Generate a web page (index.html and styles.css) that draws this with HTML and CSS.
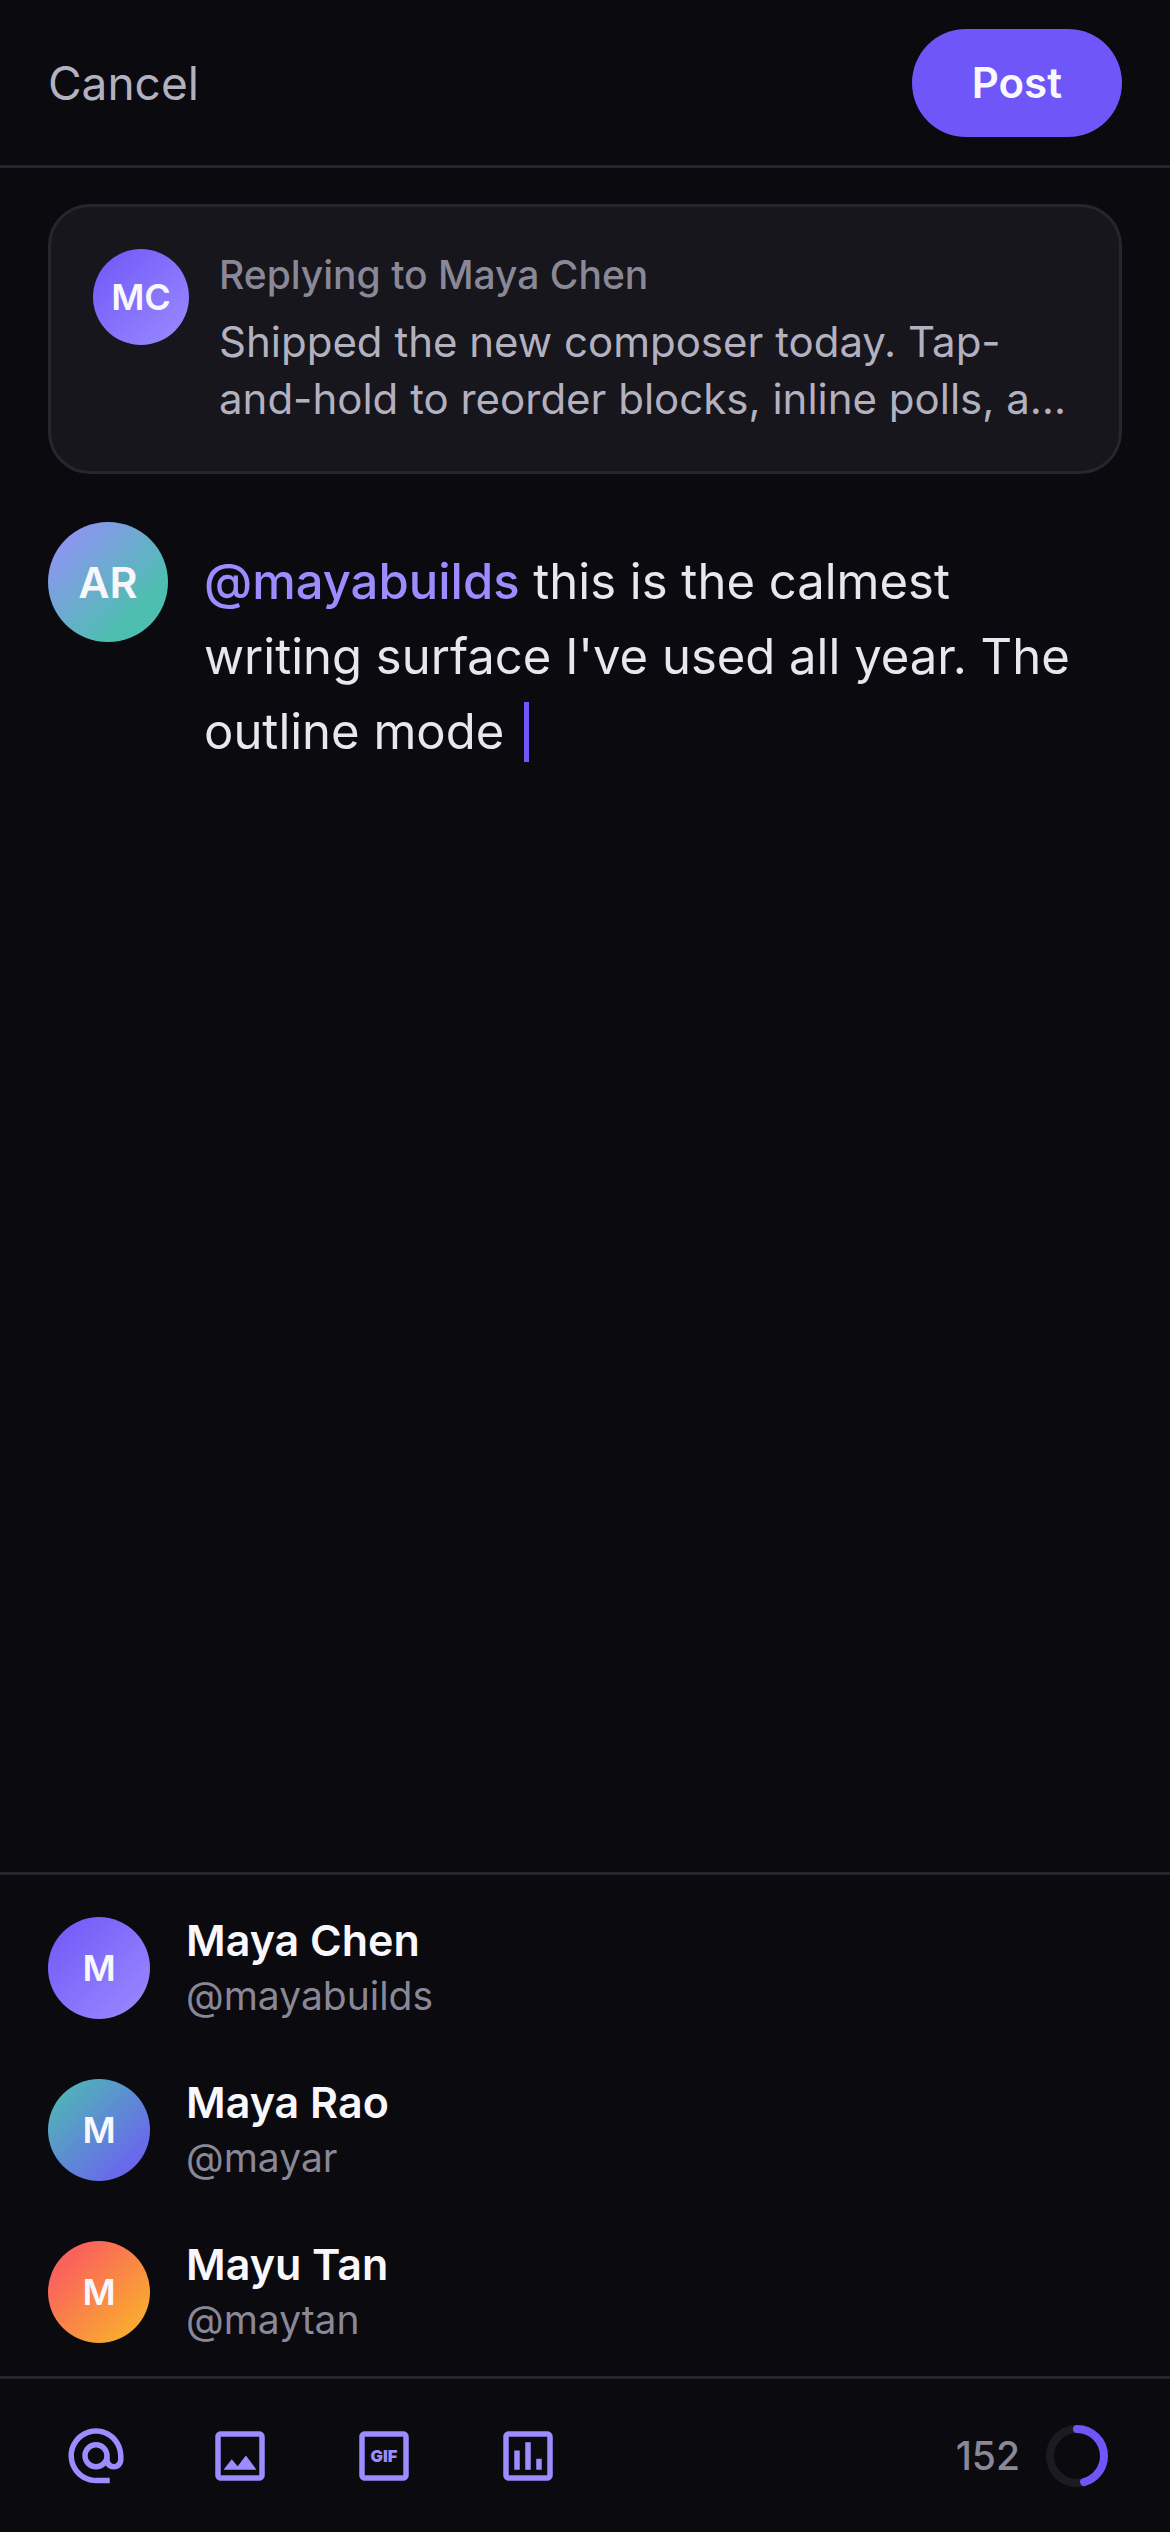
FILE: index.html
```html
<!DOCTYPE html>
<html lang="en">
  <head>
    <meta charset="utf-8">
    <meta name="viewport" content="width=device-width, initial-scale=1">
    <title>Reply</title>
    <link rel="stylesheet" href="styles.css">
  </head>
  <body>
    <header class="header">
      <button type="button" class="cancel">Cancel</button>
      <button type="submit" class="post" form="composer">Post</button>
    </header>

    <main class="main">
      <article class="quote">
        <div class="avatar avatar-quote violet">MC</div>
        <div class="quote-body">
          <h2 class="quote-title">Replying to Maya Chen</h2>
          <p class="quote-text">Shipped the new composer today. Tap-and-hold to reorder blocks, inline polls, a…</p>
        </div>
      </article>

      <form class="composer" id="composer">
        <div class="avatar avatar-me mint">AR</div>
        <div class="editor" role="textbox" aria-multiline="true" aria-label="Write your reply" contenteditable="true"><span class="mention">@mayabuilds</span> this is the calmest writing surface I've used all year. The outline mode <span class="caret"></span></div>
      </form>
    </main>

    <ul class="people">
      <li>
        <button type="button" class="person">
          <span class="avatar avatar-person violet">M</span>
          <span class="person-text">
            <span class="name">Maya Chen</span>
            <span class="handle">@mayabuilds</span>
          </span>
        </button>
      </li>
      <li>
        <button type="button" class="person">
          <span class="avatar avatar-person ocean">M</span>
          <span class="person-text">
            <span class="name">Maya Rao</span>
            <span class="handle">@mayar</span>
          </span>
        </button>
      </li>
      <li>
        <button type="button" class="person">
          <span class="avatar avatar-person sunset">M</span>
          <span class="person-text">
            <span class="name">Mayu Tan</span>
            <span class="handle">@maytan</span>
          </span>
        </button>
      </li>
    </ul>

    <footer class="toolbar">
      <div class="tools">
        <button type="button" class="tool" aria-label="Mention">
          <svg class="icon" viewBox="0 0 24 24"><path d="M12 1.95c-5.52 0-10 4.48-10 10s4.48 10 10 10h5v-2h-5c-4.34 0-8-3.66-8-8s3.66-8 8-8 8 3.66 8 8v1.43c0 .79-.71 1.57-1.5 1.57s-1.5-.78-1.5-1.57v-1.43c0-2.76-2.24-5-5-5s-5 2.24-5 5 2.24 5 5 5c1.38 0 2.64-.56 3.54-1.47.65.89 1.77 1.47 2.96 1.47 1.97 0 3.5-1.6 3.5-3.57v-1.43c0-5.52-4.48-10-10-10zm0 13c-1.66 0-3-1.34-3-3s1.34-3 3-3 3 1.34 3 3-1.34 3-3 3z"/></svg>
        </button>
        <button type="button" class="tool" aria-label="Photo">
          <svg class="icon" viewBox="0 0 24 24"><path d="M19 5v14H5V5h14m0-2H5c-1.1 0-2 .9-2 2v14c0 1.1.9 2 2 2h14c1.1 0 2-.9 2-2V5c0-1.1-.9-2-2-2zm-4.86 8.86-3 3.87L9 13.14 6 17h12l-3.86-5.14z"/></svg>
        </button>
        <button type="button" class="tool" aria-label="GIF">
          <svg class="icon" viewBox="0 0 24 24"><path d="M19 5v14H5V5h14m0-2H5c-1.1 0-2 .9-2 2v14c0 1.1.9 2 2 2h14c1.1 0 2-.9 2-2V5c0-1.1-.9-2-2-2z"/><text class="gif" x="12" y="14" text-anchor="middle">GIF</text></svg>
        </button>
        <button type="button" class="tool" aria-label="Poll">
          <svg class="icon" viewBox="0 0 24 24"><path d="M19 5v14H5V5h14m0-2H5c-1.1 0-2 .9-2 2v14c0 1.1.9 2 2 2h14c1.1 0 2-.9 2-2V5c0-1.1-.9-2-2-2zM7 10h2v7H7zm4-3h2v10h-2zm4 6h2v4h-2z"/></svg>
        </button>
      </div>
      <div class="counter">
        <span class="count">152</span>
        <svg class="ring" viewBox="0 0 90 90" aria-hidden="true">
          <circle class="ring-track" cx="45" cy="45" r="27"/>
          <circle class="ring-value" cx="45" cy="45" r="27" pathLength="280" stroke-dasharray="128 280" transform="rotate(-90 45 45)"/>
        </svg>
      </div>
    </footer>
  </body>
</html>
```

FILE: styles.css
```css
* {
  box-sizing: border-box;
}
body {
  margin: 0;
  min-height: 100vh;
  display: flex;
  flex-direction: column;
  background: #0a0a0f;
  color: #e8e6ee;
  font-family: Inter, sans-serif;
}
h2,
p,
ul {
  margin: 0;
  padding: 0;
}
ul {
  list-style: none;
}
button {
  border: 0;
  padding: 0;
  background: none;
  color: inherit;
  font: inherit;
  cursor: pointer;
}

/* header */
.header {
  display: flex;
  align-items: center;
  justify-content: space-between;
  height: 168px;
  padding: 0 48px;
  border-bottom: 3px solid #26262e;
}
.cancel {
  color: #b3b1c0;
  font-size: 46px;
}
.post {
  height: 108px;
  padding: 0 60px;
  border-radius: 54px;
  background: #6e56f8;
  color: #f8f7fc;
  font-size: 42px;
  font-weight: 600;
}

/* avatars */
.avatar {
  display: flex;
  flex: none;
  align-items: center;
  justify-content: center;
  border-radius: 50%;
  color: #f8f7fc;
  font-weight: 600;
}
.avatar-quote {
  width: 96px;
  height: 96px;
  font-size: 36px;
}
.avatar-me {
  width: 120px;
  height: 120px;
  font-size: 43px;
}
.avatar-person {
  width: 102px;
  height: 102px;
  font-size: 36px;
}
.violet {
  background: linear-gradient(135deg, #6e56f8, #9b8cff);
}
.mint {
  background: linear-gradient(135deg, #9b8cff, #4dbfb0 75%);
}
.ocean {
  background: linear-gradient(135deg, #4dbfb0, #6e56f8);
}
.sunset {
  background: linear-gradient(135deg, #fa635c 20%, #faa632 80%);
}

/* post being replied to */
.main {
  flex: 1;
  padding: 36px 48px;
}
.quote {
  display: flex;
  gap: 30px;
  padding: 42px;
  border: 3px solid #26262e;
  border-radius: 42px;
  background: #16161c;
}
.quote-body {
  flex: 1;
  min-width: 0;
  padding-bottom: 2px;
}
.quote-title {
  margin-bottom: 13px;
  color: #8a8896;
  font-size: 39px;
  font-weight: 500;
  line-height: 51px;
}
.quote-text {
  color: #b3b1c0;
  font-size: 42px;
  line-height: 57px;
}

/* reply */
.composer {
  display: flex;
  gap: 36px;
  margin-top: 48px;
}
.editor {
  flex: 1;
  padding: 22px 24px 0 0;
  outline: none;
  font-size: 49px;
  line-height: 75px;
}
.mention {
  color: #9b8cff;
  font-weight: 500;
}
.caret {
  display: inline-block;
  width: 5px;
  height: 60px;
  margin: 8px 0 0 6px;
  background: #6e56f8;
  vertical-align: top;
}

/* mention suggestions */
.people {
  padding: 12px 0 3px;
  border-top: 3px solid #26262e;
}
.person {
  display: flex;
  align-items: center;
  gap: 36px;
  width: 100%;
  height: 162px;
  padding: 0 48px;
  text-align: left;
}
.person-text {
  display: flex;
  flex-direction: column;
  line-height: 56px;
}
.name {
  color: #f8f7fc;
  font-size: 43px;
  font-weight: 600;
}
.handle {
  color: #8a8896;
  font-size: 39px;
}

/* toolbar */
.toolbar {
  display: flex;
  align-items: center;
  justify-content: space-between;
  height: 156px;
  padding: 0 48px;
  border-top: 3px solid #26262e;
}
.tools {
  display: flex;
  gap: 48px;
}
.tool {
  display: flex;
  align-items: center;
  justify-content: center;
  width: 96px;
  height: 96px;
}
.icon {
  width: 66px;
  height: 66px;
  fill: #9b8cff;
}
.gif {
  font-size: 6px;
  font-weight: 900;
}
.counter {
  display: flex;
  align-items: center;
  gap: 12px;
}
.count {
  color: #8a8896;
  font-size: 39px;
  font-weight: 500;
}
.ring {
  width: 90px;
  height: 90px;
  fill: none;
  stroke-width: 8;
}
.ring-track {
  stroke: #1c1b22;
}
.ring-value {
  stroke: #6e56f8;
  stroke-linecap: round;
}
```
